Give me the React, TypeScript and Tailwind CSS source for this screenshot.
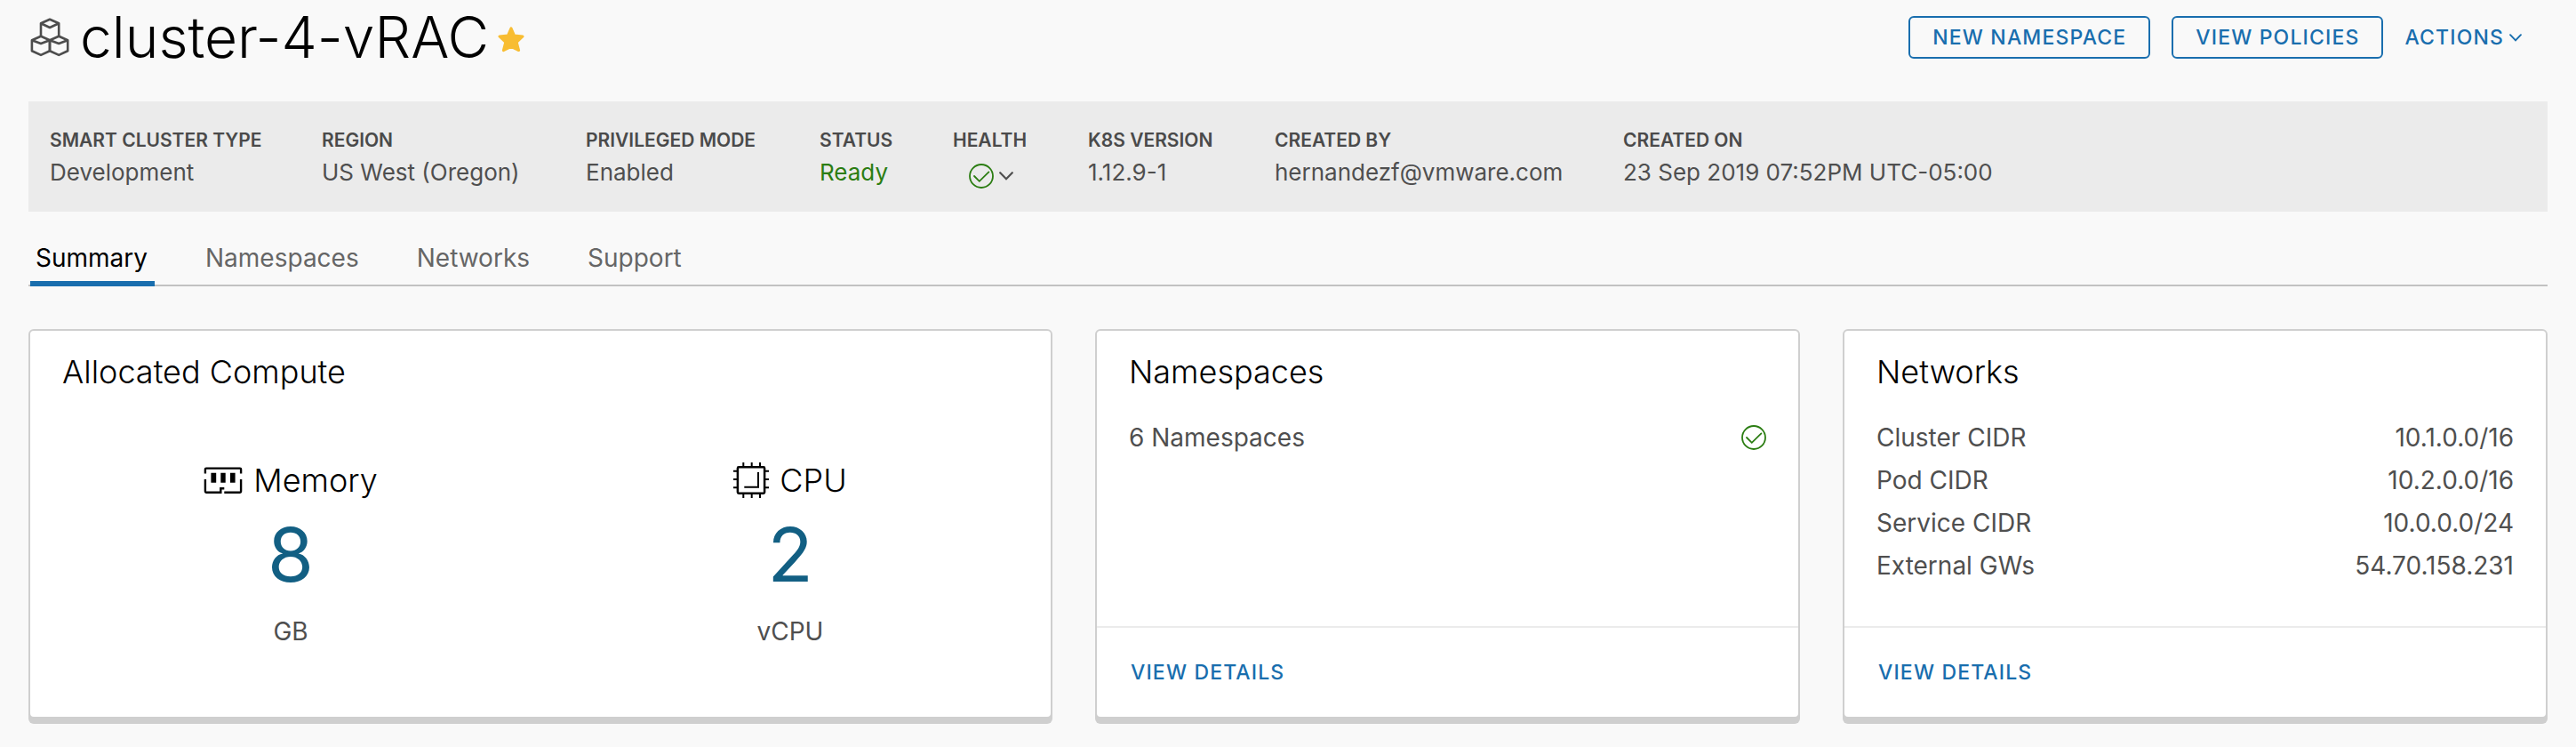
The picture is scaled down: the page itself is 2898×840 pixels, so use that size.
import type { ReactNode } from "react";

const details: { label: string; value: string; tone?: string }[] = [
  { label: "SMART CLUSTER TYPE", value: "Development" },
  { label: "REGION", value: "US West (Oregon)" },
  { label: "PRIVILEGED MODE", value: "Enabled" },
  { label: "STATUS", value: "Ready", tone: "text-[#2b7d12]" },
  { label: "HEALTH", value: "" },
  { label: "K8S VERSION", value: "1.12.9-1" },
  { label: "CREATED BY", value: "hernandezf@vmware.com" },
  { label: "CREATED ON", value: "23 Sep 2019 07:52PM UTC-05:00" },
];

const tabs = ["Summary", "Namespaces", "Networks", "Support"];

const networks = [
  ["Cluster CIDR", "10.1.0.0/16"],
  ["Pod CIDR", "10.2.0.0/16"],
  ["Service CIDR", "10.0.0.0/24"],
  ["External GWs", "54.70.158.231"],
];

function ClusterIcon() {
  return (
    <svg className="h-11 w-11 shrink-0" viewBox="9 10 44 44" fill="none" stroke="#4d4d4d" strokeWidth="2.6" strokeLinejoin="round" aria-hidden="true">
      <path d="M21 31V16.3L31 11.7L41.2 16.3V31M21 16.3L31 21L41.2 16.3" />
      <path d="M21 30.8L10.9 35.2V47.2L21 51.9L31 47.2V35.2ZM10.9 35.2L21 39L31 35.2" />
      <path d="M41.2 30.8L31 35.2V47.2L41.2 51.9L51.2 47.2V35.2ZM31 35.2L41.2 39L51.2 35.2" />
    </svg>
  );
}

function StarIcon() {
  return (
    <svg className="h-8 w-[30px]" viewBox="16 13 30 32" fill="#f8bd32" stroke="#f8bd32" strokeWidth="3" strokeLinejoin="round" aria-hidden="true">
      <path d="M31 16.8L34.6 25L44 26L37.2 32.4L39.6 41.6L31 37.4L22.4 41.6L24.8 32.4L18 26L27.4 25Z" />
    </svg>
  );
}

function CheckCircle() {
  return (
    <svg className="h-7 w-7 shrink-0" viewBox="0 0 28 28" fill="none" stroke="#2b7d12" strokeWidth="1.8" strokeLinecap="round" role="img" aria-label="Healthy">
      <circle cx="14" cy="14" r="13" />
      <path d="M6 14L11.8 19.8L22.4 9.4" />
    </svg>
  );
}

function Chevron({ className }: { className: string }) {
  return (
    <svg className={className} viewBox="0 0 16 10" fill="none" stroke="currentColor" strokeWidth="2.2" strokeLinecap="round" aria-hidden="true">
      <path d="M1.2 1.2L8 8.2L14.8 1.2" />
    </svg>
  );
}

function MemoryIcon() {
  return (
    <svg className="h-8 w-11" viewBox="20 26 44 32" fill="none" stroke="#000" strokeWidth="2.4" aria-hidden="true">
      <path d="M21.9 34.6V29.7Q21.9 28.6 23 28.6H61Q62.1 28.6 62.1 29.7V34.6" />
      <path d="M21.9 41V54.6Q21.9 55.7 23 55.7H39.3V51.3H43.3M43.3 55.7H61Q62.1 55.7 62.1 54.6V41" />
      <path d="M28.4 33.8H34.2V44.7H28.4ZM39.3 33.8H44.7V44.7H39.3ZM50 33.8H55.6V44.7H50Z" fill="#000" stroke="none" />
    </svg>
  );
}

function CpuIcon() {
  return (
    <svg className="h-10 w-10" viewBox="13 12 40 40" fill="none" stroke="#000" strokeWidth="2" aria-hidden="true">
      <rect x="17.9" y="17.2" width="30.2" height="29.6" rx="1.2" strokeWidth="2.5" />
      <path d="M24.3 12V17M33.7 12V17M43 12V17M24.3 47V52M33.7 47V52M43 47V52" />
      <path d="M13 21.7H18M13 31H18M13 40.3H18M48 21.7H53M48 31H53M48 40.3H53" />
      <path d="M41 23V39.7H25.3" />
    </svg>
  );
}

function Card({ title, children, footer }: { title: string; children: ReactNode; footer?: boolean }) {
  return (
    <section className="flex flex-col rounded-md border-2 border-[#cfcfcf] bg-white shadow-[0_6px_0_#cfcfcf]">
      <h2 className="px-9 pt-[22px] pb-0.5 text-[36px] leading-[48px] font-light text-black">{title}</h2>
      <div className="flex-1">{children}</div>
      {footer && (
        <div className="border-t-2 border-[#ebebeb] px-[38px] pt-[26px] pb-6 leading-[48px]">
          <a href="#details" className="text-[23px] font-medium tracking-wider text-[#196eae]">
            VIEW DETAILS
          </a>
        </div>
      )}
    </section>
  );
}

function Metric({ icon, name, value, unit }: { icon: ReactNode; name: string; value: string; unit: string }) {
  return (
    <div className="flex flex-col items-center">
      <div className="flex h-12 items-center gap-3">
        {icon}
        <span className="text-[36px] leading-[48px] font-light text-black">{name}</span>
      </div>
      <div className="mt-[18px] text-[84px] leading-[84px] text-[#125f83]">{value}</div>
      <div className="mt-5 text-[28px] leading-[48px]">{unit}</div>
    </div>
  );
}

export default function App() {
  return (
    <main className="min-h-screen bg-[#f9f9f9] px-8 pb-[26px] font-['Inter',sans-serif] font-normal text-[#4f4f4f]">
      <header className="flex h-[84px] items-center justify-between text-[#196eae]">
        <div className="flex items-center pl-0.5">
          <ClusterIcon />
          <h1 className="ml-3 text-[64px] leading-[84px] font-light text-black">cluster-4-vRAC</h1>
          <button type="button" aria-label="Favorite" className="ml-2.5 pt-1">
            <StarIcon />
          </button>
        </div>
        <div className="flex items-center pr-[29px] text-[23px] font-medium tracking-wider">
          <button type="button" className="h-12 rounded-md border-2 border-[#196eae] px-[25px]">NEW NAMESPACE</button>
          <button type="button" className="ml-6 h-12 rounded-md border-2 border-[#196eae] px-[25px]">VIEW POLICIES</button>
          <button type="button" className="ml-6 flex h-12 items-center gap-1.5">
            ACTIONS
            <Chevron className="h-[9px] w-[14px]" />
          </button>
        </div>
      </header>

      <dl className="mt-[30px] grid grid-cols-[306px_297px_263px_150px_152px_210px_392px_auto] bg-[#ebebeb] py-[26px] pl-6">
        {details.map((d) => (
          <div key={d.label} className="whitespace-nowrap">
            <dt className="text-[21px] leading-9 font-semibold text-[#4a4a4a]">{d.label}</dt>
            <dd className={`text-[26px] leading-9 ${d.tone ?? ""}`}>
              {d.label === "HEALTH" ? (
                <button type="button" aria-label="Health details" className="ml-[18px] flex h-9 items-center gap-1.5 pt-2">
                  <CheckCircle />
                  <Chevron className="h-[10px] w-4" />
                </button>
              ) : (
                d.value
              )}
            </dd>
          </div>
        ))}
      </dl>

      <nav className="mt-3 flex gap-[51px] pl-0.5 shadow-[inset_0_-2px_0_#c2c2c2]">
        {tabs.map((t, i) => (
          <a
            key={t}
            href={`#${t.toLowerCase()}`}
            aria-current={i === 0 ? "page" : undefined}
            className={
              i === 0
                ? "h-[72px] pt-1 pr-2 pl-1.5 text-[28px] leading-[72px] text-black shadow-[inset_0_-6px_0_#196eae]"
                : "h-[72px] pt-1 pr-2 pl-1.5 text-[28px] leading-[72px] text-[#666]"
            }
          >
            {t}
          </a>
        ))}
      </nav>

      <div className="mt-12 grid grid-cols-[1152fr_793fr_793fr] gap-12">
        <Card title="Allocated Compute">
          <div className="grid grid-cols-2 px-3 pt-[72px] pb-[72px]">
            <Metric icon={<MemoryIcon />} name="Memory" value="8" unit="GB" />
            <Metric icon={<CpuIcon />} name="CPU" value="2" unit="vCPU" />
          </div>
        </Card>
        <Card title="Namespaces" footer>
          <div className="flex items-center justify-between px-9 pt-6 text-[28px] leading-[48px]">
            <span>6 Namespaces</span>
            <CheckCircle />
          </div>
        </Card>
        <Card title="Networks" footer>
          <table className="mt-6 w-full text-[28px] leading-[48px]">
            <tbody>
              {networks.map(([k, v]) => (
                <tr key={k}>
                  <th scope="row" className="py-0 pl-9 text-left font-normal">{k}</th>
                  <td className="py-0 pr-9 text-right">{v}</td>
                </tr>
              ))}
            </tbody>
          </table>
        </Card>
      </div>
    </main>
  );
}
